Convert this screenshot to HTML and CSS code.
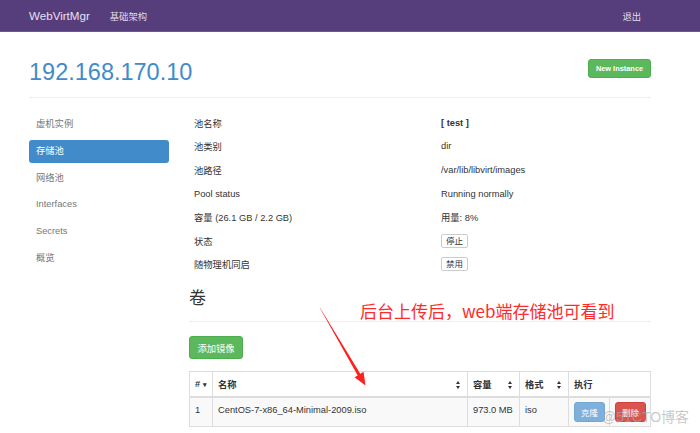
FILE: index.html
```html
<!DOCTYPE html>
<html lang="zh">
<head>
<meta charset="utf-8">
<title>WebVirtMgr</title>
<link rel="stylesheet" href="styles.css">
</head>
<body>
<nav class="navbar">
  <div class="nav-inner">
    <a class="brand">WebVirtMgr</a>
    <a class="nav-link">基础架构</a>
    <span class="spacer"></span>
    <a class="nav-link">退出</a>
  </div>
</nav>
<main class="container">
  <div class="page-header">
    <h2 class="title">192.168.170.10</h2>
    <button class="btn btn-success btn-new">New Instance</button>
  </div>
  <div class="body-row">
    <ul class="sidebar">
      <li>虚机实例</li>
      <li class="active">存储池</li>
      <li>网络池</li>
      <li>Interfaces</li>
      <li>Secrets</li>
      <li>概览</li>
    </ul>
    <section class="content">
      <div class="info">
        <div class="lbl">池名称</div><div class="val"><b>[ test ]</b></div>
        <div class="lbl">池类别</div><div class="val">dir</div>
        <div class="lbl">池路径</div><div class="val">/var/lib/libvirt/images</div>
        <div class="lbl">Pool status</div><div class="val">Running normally</div>
        <div class="lbl">容量 (26.1 GB / 2.2 GB)</div><div class="val">用量: 8%</div>
        <div class="lbl">状态</div><div class="val"><button class="btn-xs">停止</button></div>
        <div class="lbl">随物理机同启</div><div class="val"><button class="btn-xs">禁用</button></div>
      </div>
      <h3 class="section">卷</h3>
      <button class="btn btn-success btn-add">添加镜像</button>
      <table class="vol">
        <colgroup>
          <col style="width:23px"><col style="width:255px"><col style="width:52px"><col style="width:49px"><col style="width:41px"><col>
        </colgroup>
        <thead>
          <tr>
            <th># <span class="caret">&#9662;</span></th>
            <th>名称<span class="sort"></span></th>
            <th>容量<span class="sort"></span></th>
            <th>格式<span class="sort"></span></th>
            <th colspan="2">执行</th>
          </tr>
        </thead>
        <tbody>
          <tr>
            <td>1</td>
            <td>CentOS-7-x86_64-Minimal-2009.iso</td>
            <td>973.0 MB</td>
            <td>iso</td>
            <td><button class="btn btn-clone">克隆</button></td>
            <td><button class="btn btn-del">删除</button></td>
          </tr>
        </tbody>
      </table>
    </section>
  </div>
</main>
<div class="note">后台上传后，web端存储池可看到</div>
<svg class="arrow" width="700" height="433" viewBox="0 0 700 433">
  <polygon points="319.7,307.8 320.3,308.2 360.3,373.8 363.5,371.8 365.5,385.5 354.5,377.2 357.7,375.4" fill="#ff2020"/>
</svg>
<div class="watermark">@51CTO博客</div>
</body>
</html>
```
FILE: styles.css
```css
* { box-sizing: border-box; }
html, body { margin: 0; padding: 0; }
body {
  width: 700px;
  height: 433px;
  overflow: hidden;
  position: relative;
  font-family: "Liberation Sans", Arial, "Noto Sans CJK SC", sans-serif;
  font-size: 9.3px;
  color: #333;
  background: #fff;
}
.navbar {
  height: 32px;
  background: #563d7c;
  border-bottom: 1px solid #6f5499;
}
.nav-inner {
  display: flex;
  align-items: center;
  height: 31px;
  padding: 0 59px 0 29px;
}
.brand {
  font-size: 11.6px;
  color: #e6e0ee;
  margin-right: 20px;
}
.nav-link {
  font-size: 9.3px;
  color: #e2dcea;
}
.spacer { flex: 1; }
.container {
  width: 622px;
  margin-left: 29px;
}
.page-header {
  display: flex;
  justify-content: space-between;
  align-items: flex-start;
  margin-top: 27px;
  padding-bottom: 12px;
  border-bottom: 1px solid #eee;
}
.title {
  margin: 0;
  font-size: 23.5px;
  line-height: 26px;
  font-weight: normal;
  color: #428bca;
}
.btn {
  border: 1px solid transparent;
  border-radius: 3px;
  font-family: inherit;
  color: #fff;
  padding: 0;
  cursor: pointer;
}
.btn-success { background: #5cb85c; border-color: #4cae4c; }
.btn-new {
  width: 63px;
  height: 19px;
  font-size: 7.4px;
  font-weight: bold;
}
.body-row {
  display: flex;
  gap: 20px;
  margin-top: 13px;
}
.sidebar {
  list-style: none;
  margin: 2px 0 0;
  padding: 0;
  width: 140px;
  display: flex;
  flex-direction: column;
  gap: 3.8px;
}
.sidebar li {
  height: 23px;
  line-height: 23px;
  padding-left: 7px;
  border-radius: 3px;
  color: #777;
  font-size: 9.3px;
}
.sidebar li.active {
  background: #428bca;
  color: #fff;
}
.content { flex: 1; }
.info {
  display: grid;
  grid-template-columns: 247px 1fr;
  grid-auto-rows: 23.6px;
}
.info > div {
  display: flex;
  align-items: center;
  padding-left: 5px;
}
.btn-xs {
  font-family: inherit;
  font-size: 8.5px;
  height: 14px;
  padding: 0 4px;
  background: #fff;
  border: 1px solid #ccc;
  border-radius: 2px;
  color: #333;
  line-height: 12px;
}
.section {
  margin: 13px 0 0;
  font-size: 17px;
  font-weight: normal;
  line-height: 20px;
  padding-bottom: 12px;
  border-bottom: 1px solid #eee;
  color: #333;
}
.btn-add {
  margin-top: 14px;
  width: 54px;
  height: 23px;
  font-size: 9.3px;
  display: block;
}
.vol {
  margin-top: 12px;
  width: 462px;
  table-layout: fixed;
  border-collapse: collapse;
  font-size: 9.3px;
}
.vol th, .vol td {
  border: 1px solid #ddd;
  text-align: left;
  padding: 0 5px;
  white-space: nowrap;
  overflow: hidden;
}
.vol th {
  height: 25px;
  font-weight: bold;
  position: relative;
  border-bottom: 2px solid #ddd;
}
.vol td {
  height: 30px;
  vertical-align: top;
  padding-top: 7px;
  background: #f9f9f9;
}
.vol td:nth-child(5), .vol td:nth-child(6) { padding-top: 4px; }
.caret { font-size: 7px; }
.sort {
  position: absolute;
  right: 6px;
  top: 9px;
  width: 5px;
  height: 8px;
}
.sort::before, .sort::after {
  content: "";
  position: absolute;
  left: 0;
  border-left: 2.5px solid transparent;
  border-right: 2.5px solid transparent;
}
.sort::before { top: 0; border-bottom: 3px solid #333; }
.sort::after { bottom: 0; border-top: 3px solid #333; }
.btn-clone {
  width: 31px;
  height: 20px;
  background: #7fb0dc;
  border-color: #74a6d2;
  font-size: 8.5px;
}
.btn-del {
  width: 31px;
  height: 20px;
  background: #d9534f;
  border-color: #d43f3a;
  font-size: 8.5px;
}
.note {
  position: absolute;
  left: 360px;
  top: 300px;
  font-family: "Noto Sans CJK SC", sans-serif;
  font-size: 17px;
  line-height: 22px;
  color: #ff2a2a;
}
.arrow {
  position: absolute;
  left: 0;
  top: 0;
  pointer-events: none;
}
.watermark {
  position: absolute;
  left: 602px;
  top: 406px;
  font-family: "Liberation Sans", "Noto Sans CJK SC", sans-serif;
  font-size: 14px;
  color: rgba(170, 170, 170, 0.65);
}
```
